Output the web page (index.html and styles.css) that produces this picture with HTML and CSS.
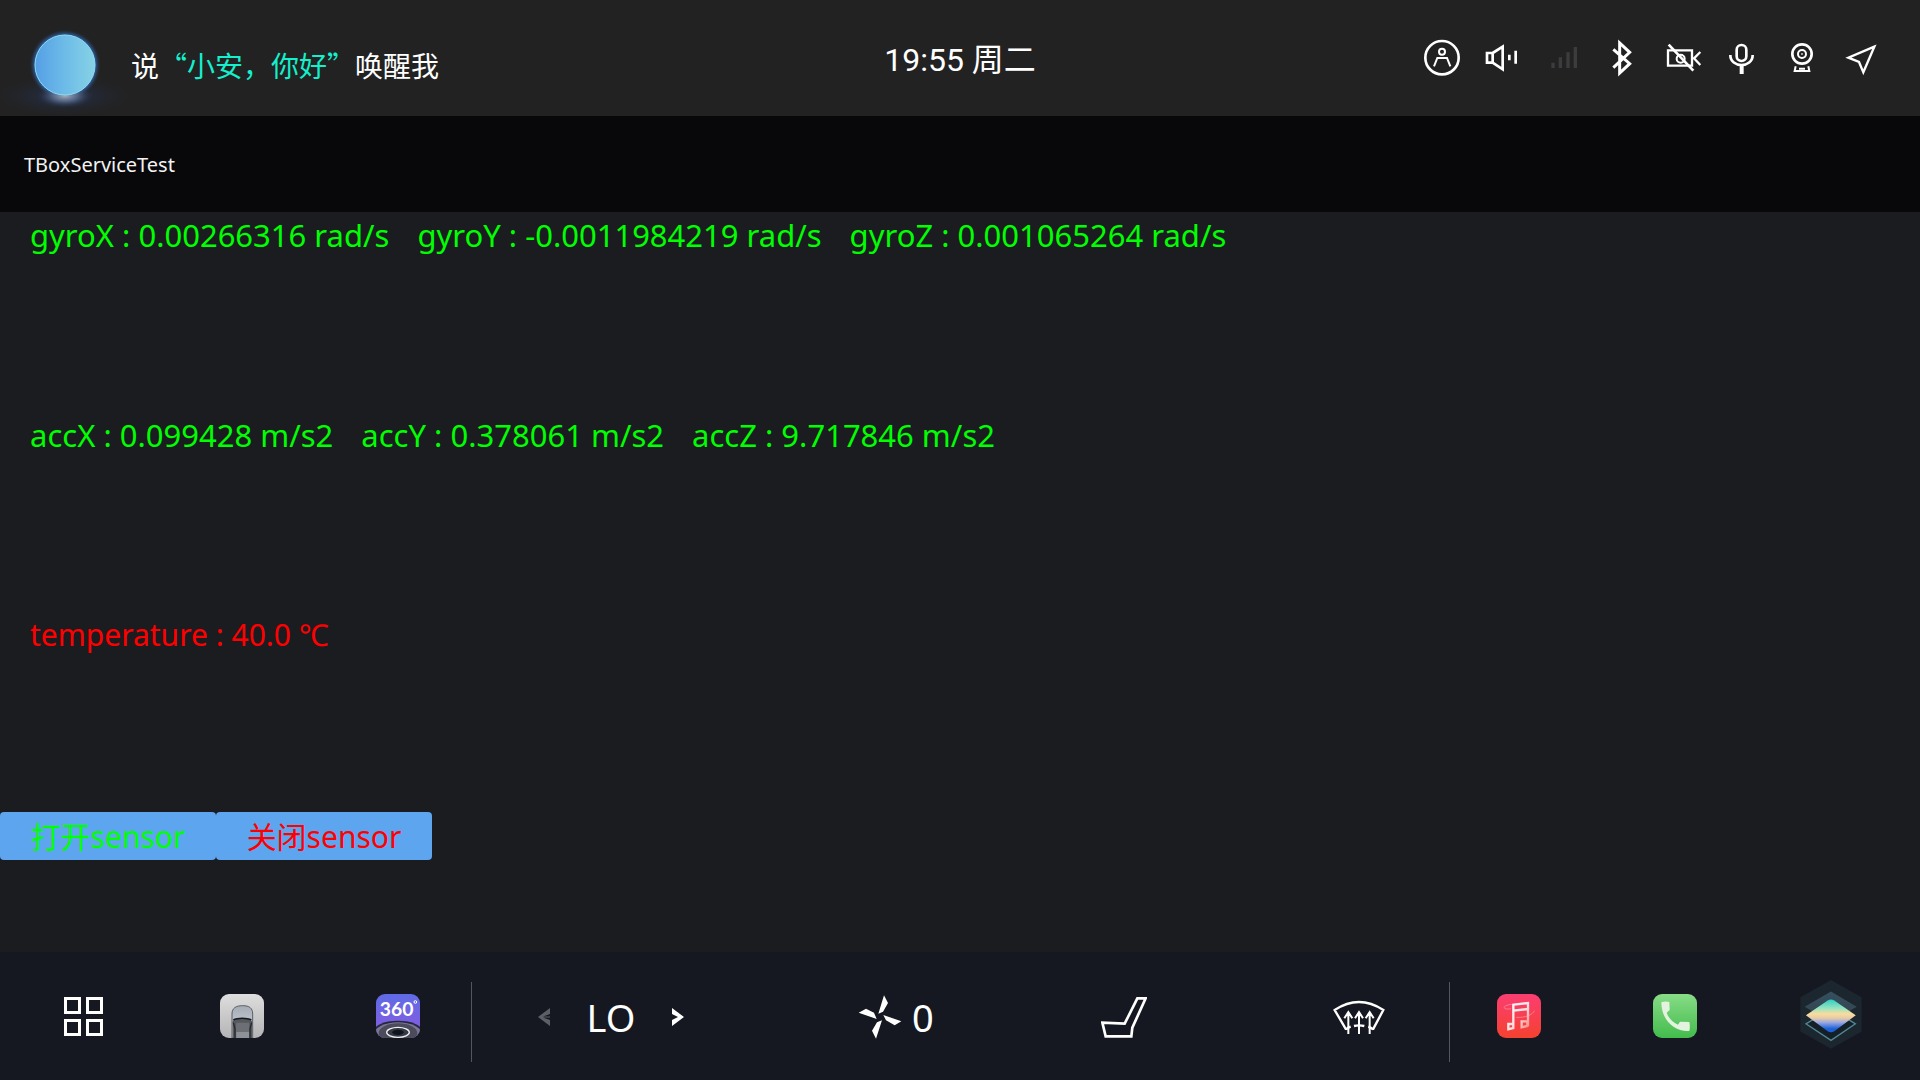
FILE: index.html
```html
<!DOCTYPE html>
<html lang="zh-CN">
<head>
<meta charset="utf-8">
<title>TBoxServiceTest</title>
<meta name="viewport" content="width=device-width, initial-scale=1">
<link rel="stylesheet" href="styles.css">
</head>
<body>
<header class="topbar">
  <div class="assistant">
    <svg class="orb" viewBox="0 0 131 102" aria-hidden="true">
      <defs>
        <linearGradient id="orbFill" x1="0" y1="0" x2="1" y2="0">
          <stop offset="0" stop-color="#549fe6"/><stop offset=".45" stop-color="#6bb9e8"/><stop offset="1" stop-color="#86d2e6"/>
        </linearGradient>
        <radialGradient id="orbHalo">
          <stop offset=".8" stop-color="#3f7fd0"/><stop offset=".9" stop-color="#2c5288" stop-opacity=".55"/><stop offset="1" stop-color="#222" stop-opacity="0"/>
        </radialGradient>
        <radialGradient id="orbFloor">
          <stop offset="0" stop-color="#a3a9b8"/><stop offset=".45" stop-color="#5d7192" stop-opacity=".8"/><stop offset="1" stop-color="#22304c" stop-opacity="0"/>
        </radialGradient>
        <radialGradient id="orbHaze">
          <stop offset="0" stop-color="#27365a" stop-opacity=".8"/><stop offset="1" stop-color="#222838" stop-opacity="0"/>
        </radialGradient>
      </defs>
      <ellipse cx="64" cy="82" rx="67" ry="20" fill="url(#orbHaze)"/>
      <circle cx="65" cy="51" r="36" fill="url(#orbHalo)"/>
      <ellipse cx="65" cy="82" rx="28" ry="12" fill="url(#orbFloor)"/>
      <circle cx="65" cy="51" r="30" fill="url(#orbFill)" stroke="#8adcf0"/>
    </svg>
    <p class="wake">说<em class="wake-word">“小安，你好”</em>唤醒我</p>
  </div>
  <time class="clock">19:55 周二</time>
  <div class="status">
    <svg class="status-icon" viewBox="36 24 180 180" role="img" aria-label="账户"><circle cx="126" cy="113" r="50" stroke-width="8"/><circle cx="126" cy="95" r="9" stroke-width="6"/><path d="M102 139l10-25h29l10 25" stroke-width="6"/></svg>
    <svg class="status-icon" viewBox="216 24 180 180" role="img" aria-label="音量"><path d="M261 99h17v29h-17zM278 99l30-19v68l-30-20" stroke-width="8"/><path d="M328 104v17M347 92v39" stroke-width="8"/></svg>
    <svg class="status-icon status-icon--off" viewBox="396 24 180 180" role="img" aria-label="信号"><path d="M459 128v16M481 112v32M504 97v47M526 81v63" stroke-width="10"/></svg>
    <svg class="status-icon" viewBox="576 24 180 180" role="img" aria-label="蓝牙"><path d="M640 88l49 43-30 28V69l30 28-49 46" stroke-width="9"/></svg>
    <svg class="status-icon" viewBox="36 24 180 180" role="img" aria-label="摄像头关闭"><path d="M84 91h72v46H84zM181 96l-19 19 19 20" stroke-width="7"/><circle cx="122" cy="116" r="12" stroke-width="6"/><path d="M86 74l74 78" stroke-width="8"/></svg>
    <svg class="status-icon" viewBox="216 24 180 180" role="img" aria-label="麦克风"><rect x="290" y="75" width="29" height="48" rx="14" stroke-width="8"/><path d="M271 105c0 40 67 40 67 0" stroke-width="8"/><path d="M305 134v28" stroke-width="12"/></svg>
    <svg class="status-icon" viewBox="396 24 180 180" role="img" aria-label="行车记录仪"><circle cx="486" cy="102" r="29" stroke-width="8"/><circle cx="486" cy="102" r="12" stroke-width="6"/><circle cx="486" cy="102" r="2" stroke-width="2"/><path d="M467 139l-3 14h44l-3-14M477 146h18" stroke-width="6"/></svg>
    <svg class="status-icon" viewBox="576 24 180 180" role="img" aria-label="定位"><path d="M703 80l-78 33 32 13 13 31z" stroke-width="7"/></svg>
  </div>
</header>

<h1 class="app-title">TBoxServiceTest</h1>

<main class="content">
  <section class="readings"><span>gyroX : 0.00266316 rad/s</span><span>gyroY : -0.0011984219 rad/s</span><span>gyroZ : 0.001065264 rad/s</span></section>
  <section class="readings"><span>accX : 0.099428 m/s2</span><span>accY : 0.378061 m/s2</span><span>accZ : 9.717846 m/s2</span></section>
  <section class="readings readings--alert"><span>temperature : 40.0 ℃</span></section>
  <div class="actions">
    <button class="action action--open" type="button">打开sensor</button>
    <button class="action action--close" type="button">关闭sensor</button>
  </div>
</main>

<nav class="dock">
  <div class="dock-apps dock-apps--left">
    <button class="dock-button dock-button--menu" type="button" aria-label="全部应用">
      <svg class="icon-grid" viewBox="0 0 39 39"><path d="M1.5 1.5h14v14h-14zM23.500 1.500h14v14h-14zM1.500 23.500h14v14h-14zM23.500 23.500h14v14h-14z" fill="none" stroke="#fff" stroke-width="3"/></svg>
    </button>
    <button class="dock-button" type="button" aria-label="车辆">
      <svg class="app-icon" viewBox="0 0 132 132">
        <defs>
          <linearGradient id="carBg" x1="0" y1="0" x2="0" y2="1"><stop offset="0" stop-color="#dedede"/><stop offset="1" stop-color="#b4b4b6"/></linearGradient>
          <linearGradient id="carHood" x1="0" y1="0" x2="0" y2="1"><stop offset="0" stop-color="#a5abb5"/><stop offset="1" stop-color="#d7dce4"/></linearGradient>
        </defs>
        <rect width="132" height="132" fill="url(#carBg)"/>
        <path d="M36 132V60c0-18 12-25 32-25s30 7 30 25v72z" fill="url(#carHood)" stroke="#5b5e64" stroke-width="3"/>
        <path d="M38 82c10-12 48-12 58 0v50H38z" fill="#55585c"/>
        <path d="M40 78c12-7 42-7 54 0" fill="none" stroke="#17191c" stroke-width="5"/>
        <path d="M45 132l4-46h38l4 46z" fill="#6c7076"/>
        <path d="M49 132v-18h38v18z" fill="#8d9299"/>
        <path d="M40 86l5 18v28M95 86l-5 18v28" fill="none" stroke="#24272b" stroke-width="4"/>
      </svg>
    </button>
    <button class="dock-button" type="button" aria-label="360 全景">
      <svg class="app-icon" viewBox="0 0 132 132">
        <defs><linearGradient id="panoBg" x1="0" y1="0" x2="0" y2="1"><stop offset="0" stop-color="#5f6be6"/><stop offset="1" stop-color="#8a5ae0"/></linearGradient></defs>
        <rect width="132" height="132" fill="url(#panoBg)"/>
        <ellipse cx="66" cy="116" rx="76" ry="36" fill="#25273a"/>
        <ellipse cx="66" cy="119" rx="72" ry="34" fill="#7a7698"/>
        <ellipse cx="66" cy="117" rx="58" ry="29" fill="#4b4b5c"/>
        <ellipse cx="66" cy="115" rx="34" ry="15" fill="#363945" stroke="#eee" stroke-width="4"/>
        <ellipse cx="66" cy="115" rx="17" ry="8" fill="#10141b"/>
        <text class="pano-label" x="62" y="65" text-anchor="middle">360</text>
        <circle cx="118" cy="24" r="4" fill="none" stroke="#fff" stroke-width="3"/>
      </svg>
    </button>
  </div>

  <div class="climate">
    <div class="temperature">
      <button class="step" type="button" aria-label="降低温度"><svg class="icon-step" viewBox="0 0 12 18"><path d="M12 0v6L5 8.500h7v1H5l7 2.500v6L0 9z" fill="#5d5f66"/></svg></button>
      <output class="value">LO</output>
      <button class="step" type="button" aria-label="升高温度"><svg class="icon-step" viewBox="0 0 12 18"><path d="M0 0v6l6 3-6 3v6l12-9z" fill="#fff"/></svg></button>
    </div>
    <button class="fan" type="button" aria-label="风量 0">
      <svg class="icon-fan" viewBox="1075 102 130 132"><path d="M1152 103l-17 55 14-6 15-26zM1204 181l-54-19 8 16 26 15zM1128 233l18-55-15 6-15 25zM1076 155l54 19-8-19-24-12z" fill="#fff"/></svg>
      <span class="value">0</span>
    </button>
    <button class="climate-button" type="button" aria-label="座椅">
      <svg class="icon-seat" viewBox="63 80 138 123"><path d="M172 84h25l-40 88-3 26H77l-10-41 67 3z" fill="none" stroke="#fff" stroke-width="8"/></svg>
    </button>
    <button class="climate-button" type="button" aria-label="前风挡除霜">
      <svg class="icon-defrost" viewBox="759 86 156 105"><g fill="none" stroke="#fff"><path d="M798 174l-34-58q73-48 146 0l-31 58M798 174q8-6 14-8M879 174q-8-6-14-8M822 164q15-4 31 0" stroke-width="7"/><path d="M805 188v-67M793 141l12-19 12 19M837 188v-67M825 141l12-19 12 19M869 188v-67M857 141l12-19 12 19" stroke-width="6"/></g></svg>
    </button>
  </div>

  <div class="dock-apps dock-apps--right">
    <button class="dock-button" type="button" aria-label="音乐">
      <svg class="app-icon" viewBox="0 0 132 132">
        <defs>
          <linearGradient id="musicBg" x1="0" y1="0" x2="0" y2="1"><stop offset="0" stop-color="#fb3e72"/><stop offset="1" stop-color="#f5412f"/></linearGradient>
          <linearGradient id="noteFill" x1="0" y1="0" x2="1" y2="1"><stop offset="0" stop-color="#fff"/><stop offset=".55" stop-color="#ffdfe2"/><stop offset="1" stop-color="#ff8b80"/></linearGradient>
        </defs>
        <rect width="132" height="132" fill="url(#musicBg)"/>
        <path d="M44 31c-30 3-29 18-2 13M112 50c-4 12-28 22-54 20" fill="none" stroke="#ff9db0" stroke-width="2"/>
        <path d="M49 104V32l44-5v69M49 50l44-5M34 90h15v12l-15 4zM74 82h17v14l-17 4z" fill="none" stroke="url(#noteFill)" stroke-width="7"/>
      </svg>
    </button>
    <button class="dock-button" type="button" aria-label="电话">
      <svg class="app-icon" viewBox="0 0 132 132">
        <defs><linearGradient id="phoneBg" x1="0" y1="0" x2="0" y2="1"><stop offset="0" stop-color="#88dc86"/><stop offset="1" stop-color="#43bc4d"/></linearGradient></defs>
        <rect width="132" height="132" fill="url(#phoneBg)"/>
        <path d="M25 25q12-5 24-1l1 24-9 8c5 16 17 28 34 36l6-9 28 1q3 12 0 27C64 114 25 78 25 25z" fill="#e4f3df"/>
      </svg>
    </button>
    <button class="dock-button dock-button--home" type="button" aria-label="桌面">
      <svg class="icon-layers" viewBox="992 56 188 210">
        <defs>
          <linearGradient id="layerFill" x1="0" y1="0" x2="0" y2="1"><stop offset="0" stop-color="#2dcfc4"/><stop offset=".28" stop-color="#9be5c0"/><stop offset=".44" stop-color="#f8dc9d"/><stop offset=".57" stop-color="#e8cba6"/><stop offset=".7" stop-color="#9ba9e0"/><stop offset=".9" stop-color="#1c60d8"/></linearGradient>
          <linearGradient id="layerTop" x1="0" y1="0" x2="0" y2="1"><stop offset="0" stop-color="#35505e"/><stop offset="1" stop-color="#33414d"/></linearGradient>
        </defs>
        <path d="M1086 58l93 52v104l-93 52-93-52V110z" fill="#1c262e"/>
        <path d="M1086 93l78 46-78 46-80-46z" fill="url(#layerTop)"/>
        <path d="M1010 191l76-46 74 46-74 50z" fill="#151f27" stroke="#4f8791" stroke-width="4"/>
        <path d="M1076 120q10-6 20 0l65 45-65 48q-10 6-20 0l-66-48z" fill="url(#layerFill)"/>
      </svg>
    </button>
  </div>
</nav>
</body>
</html>
```
FILE: styles.css
```css
* { box-sizing: border-box; }

body {
  margin: 0;
  min-height: 100vh;
  display: flex;
  flex-direction: column;
  background: #1b1c20;
  color: #fff;
  font-family: "Noto Sans", "Noto Sans CJK SC", sans-serif;
}

button {
  margin: 0;
  padding: 0;
  border: 0;
  background: none;
  color: inherit;
  font: inherit;
  cursor: pointer;
}

svg { display: block; flex: none; }

/* Top bar */
.topbar {
  display: grid;
  grid-template-columns: 1fr auto 1fr;
  align-items: center;
  height: 116px;
  background: #222;
}

.assistant {
  display: flex;
  align-items: center;
  padding-top: 14px;
}

.orb { width: 131px; height: 102px; }

.wake {
  margin: 0;
  font-family: "Noto Sans CJK SC", sans-serif;
  font-size: 28px;
  line-height: 40px;
  white-space: nowrap;
}

.wake-word { color: #14f0cc; font-style: normal; }

.clock {
  padding-top: 4px;
  font-family: Roboto, "Noto Sans CJK SC", sans-serif;
  font-size: 32px;
  line-height: 40px;
}

.status {
  display: flex;
  justify-content: flex-end;
  padding-right: 28px;
}

.status-icon {
  width: 60px;
  height: 60px;
  fill: none;
  stroke: #fff;
}

.status-icon--off { stroke: #3b3c3e; }

/* Application */
.app-title {
  display: flex;
  align-items: center;
  height: 96px;
  margin: 0;
  padding-left: 24px;
  background: #08080b;
  color: #f2f2f2;
  font-size: 20px;
  font-weight: 400;
}

.content { flex: 1; }

.readings {
  display: flex;
  gap: 28px;
  height: 200px;
  padding: 2px 30px 0;
  color: #0f0;
  font-size: 31px;
  line-height: 42px;
}

.readings--alert { color: #f00; font-size: 30px; }

.actions { display: flex; }

.action {
  min-width: 216px;
  height: 48px;
  padding-top: 2px;
  border-radius: 4px;
  background: #5ea5f0;
  font-size: 30px;
  line-height: 46px;
}

.action--open { color: #0f0; }
.action--close { color: #f00; }

/* Dock */
.dock {
  display: grid;
  grid-template-columns: 471fr 979fr 470fr;
  align-items: center;
  height: 128px;
  background: #151820;
}

.dock-apps {
  display: flex;
  align-items: center;
  gap: 112px;
}

.dock-apps--left { justify-content: flex-end; padding-right: 51px; }
.dock-apps--right { padding-left: 47px; }

.dock-button {
  display: flex;
  align-items: center;
  justify-content: center;
  width: 44px;
  height: 44px;
}

.dock-button--menu { justify-content: flex-start; }
.dock-button--home { margin-bottom: 4px; }

.icon-grid { width: 39px; height: 39px; }
.app-icon { width: 44px; height: 44px; border-radius: 9px; }
.icon-layers { width: 62px; height: 70px; }

.pano-label {
  fill: #fff;
  font-family: Lato, sans-serif;
  font-size: 58px;
  font-weight: 700;
}

.climate {
  display: grid;
  grid-template-columns: 320fr 243fr 232fr 116fr;
  align-items: center;
  justify-items: start;
  height: 80px;
  margin-top: 12px;
  padding: 0 0 10px 66px;
  border: solid #54565c;
  border-width: 0 1px;
}

.temperature {
  display: flex;
  align-items: center;
  justify-content: space-between;
  width: 146px;
}

.icon-step { width: 12px; height: 18px; }

.value { font-size: 38px; line-height: 48px; }

.fan { display: flex; align-items: center; gap: 10px; }
.icon-fan { width: 44px; height: 44px; }
.icon-seat { width: 46px; height: 41px; }
.icon-defrost { width: 52px; height: 35px; }
```
